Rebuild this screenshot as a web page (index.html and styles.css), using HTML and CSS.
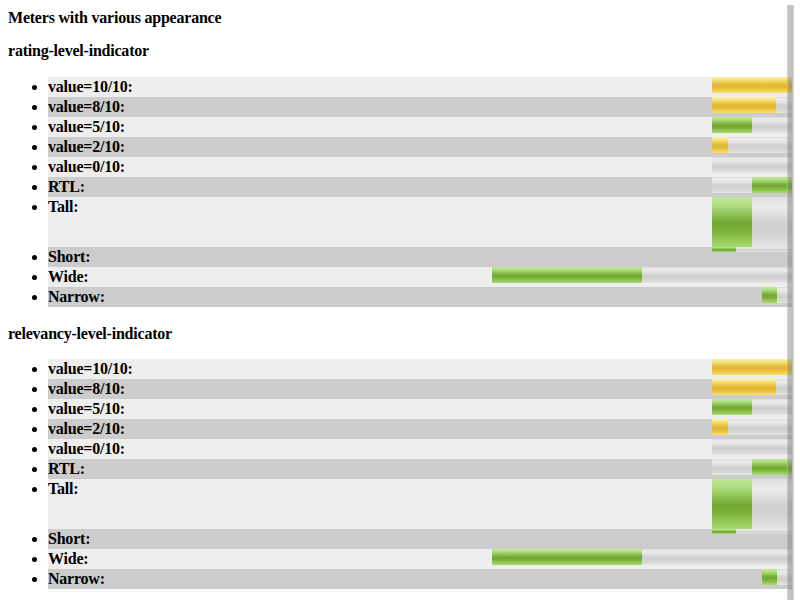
FILE: index.html
```html
<!DOCTYPE html>
<html>
<head>
<meta charset="utf-8">
<link rel="stylesheet" href="styles.css">
</head>
<body>
<div class="title">Meters with various appearance</div>
<h2 class="section first">rating-level-indicator</h2>
<ul class="list">
  <li class="row"><span class="meter"><span class="fill yellow" style="width:80px"></span></span>value=10/10:</li>
  <li class="row"><span class="meter"><span class="fill yellow" style="width:64px"></span></span>value=8/10:</li>
  <li class="row"><span class="meter"><span class="fill green" style="width:40px"></span></span>value=5/10:</li>
  <li class="row"><span class="meter"><span class="fill yellow" style="width:16px"></span></span>value=2/10:</li>
  <li class="row"><span class="meter"><span class="fill yellow" style="width:0px"></span></span>value=0/10:</li>
  <li class="row"><span class="meter rtl"><span class="fill green" style="width:40px"></span></span>RTL:</li>
  <li class="row"><span class="meter tall"><span class="fill green" style="width:40px"></span></span>Tall:</li>
  <li class="row"><span class="meter short"><span class="fill green" style="width:24px"></span></span>Short:</li>
  <li class="row"><span class="meter wide"><span class="fill green" style="width:150px"></span></span>Wide:</li>
  <li class="row"><span class="meter narrow"><span class="fill green" style="width:15px"></span></span>Narrow:</li>
</ul>
<h2 class="section second">relevancy-level-indicator</h2>
<ul class="list">
  <li class="row"><span class="meter"><span class="fill yellow" style="width:80px"></span></span>value=10/10:</li>
  <li class="row"><span class="meter"><span class="fill yellow" style="width:64px"></span></span>value=8/10:</li>
  <li class="row"><span class="meter"><span class="fill green" style="width:40px"></span></span>value=5/10:</li>
  <li class="row"><span class="meter"><span class="fill yellow" style="width:16px"></span></span>value=2/10:</li>
  <li class="row"><span class="meter"><span class="fill yellow" style="width:0px"></span></span>value=0/10:</li>
  <li class="row"><span class="meter rtl"><span class="fill green" style="width:40px"></span></span>RTL:</li>
  <li class="row"><span class="meter tall"><span class="fill green" style="width:40px"></span></span>Tall:</li>
  <li class="row"><span class="meter short"><span class="fill green" style="width:24px"></span></span>Short:</li>
  <li class="row"><span class="meter wide"><span class="fill green" style="width:150px"></span></span>Wide:</li>
  <li class="row"><span class="meter narrow"><span class="fill green" style="width:15px"></span></span>Narrow:</li>
</ul>
<div class="scrollbar"></div>
</body>
</html>
```
FILE: styles.css
```css
html, body {
  background: #ffffff;
}
body {
  margin: 8px;
  font-family: "Liberation Serif", "Times New Roman", serif;
  font-size: 16px;
  font-weight: bold;
  letter-spacing: -0.22px;
  color: #000;
}
.title {
  line-height: 20px;
  margin: 0;
}
.section {
  font-size: 16px;
  line-height: 20px;
}
.section.first {
  margin: 13px 0 16px 0;
}
.section.second {
  margin: 17px 0 15px 0;
}
.list {
  margin: 0;
  padding-left: 40px;
  list-style: disc outside;
}
.row {
  display: list-item;
  line-height: 20px;
  background: #eeeeee;
}
.row::after {
  content: "";
  display: block;
  clear: both;
}
.row:nth-child(even) {
  background: #cccccc;
}
.meter {
  float: right;
  display: flex;
  width: 80px;
  height: 16px;
  background: linear-gradient(to bottom, #dedede 0%, #ececec 18%, #e2e2e2 32%, #d2d2d2 50%, #cfcfcf 62%, #d8d8d8 82%, #e6e6e6 100%);
}
.meter.rtl {
  justify-content: flex-end;
}
.meter.tall {
  height: 50px;
}
.meter.short {
  height: 5px;
}
.meter.wide {
  width: 300px;
}
.meter.narrow {
  width: 30px;
}
.fill {
  display: block;
  height: 100%;
}
.fill.yellow {
  background: linear-gradient(to bottom, #fdf3a6 0%, #f8e586 15%, #efcf58 32%, #e4b934 50%, #e5b832 62%, #efcb4c 82%, #f7df6e 100%);
}
.fill.green {
  background: linear-gradient(to bottom, #c2e897 0%, #b0dc80 18%, #8fc356 35%, #73a733 52%, #78ad36 65%, #94c958 85%, #a9da70 100%);
}
.scrollbar {
  position: fixed;
  left: 787px;
  top: 5px;
  width: 7px;
  bottom: 0;
  background: rgba(120, 120, 120, 0.45);
  box-shadow: inset 1px 0 0 rgba(255,255,255,0.25), inset -1px 0 0 rgba(255,255,255,0.25);
}
```
